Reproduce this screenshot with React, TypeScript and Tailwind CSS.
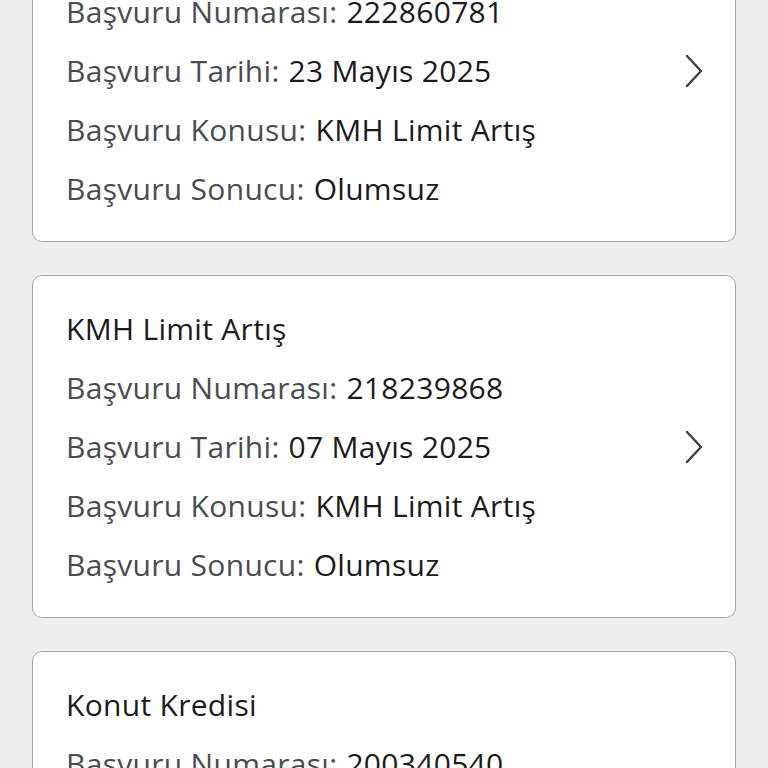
type Application = {
    title: string;
    number: string;
    date: string;
    subject: string;
    result: string;
};

const applications: Application[] = [
    { title: "KMH Limit Artış", number: "222860781", date: "23 Mayıs 2025", subject: "KMH Limit Artış", result: "Olumsuz" },
    { title: "KMH Limit Artış", number: "218239868", date: "07 Mayıs 2025", subject: "KMH Limit Artış", result: "Olumsuz" },
    { title: "Konut Kredisi", number: "200340540", date: "12 Nisan 2025", subject: "Konut Kredisi", result: "Olumsuz" },
];

function Row({ label, value }: { label: string; value: string }) {
    return (
        <div className="h-[59px] flex items-center whitespace-nowrap">
            <span className="text-[#474d52]">{label}:</span>
            <span className="ml-[9px] text-[#1b1b1b]">{value}</span>
        </div>
    );
}

function Chevron() {
    return (
        <svg width="20" height="34" viewBox="0 0 20 34" fill="none" className="shrink-0">
            <path d="M3 2 L17 17 L3 32" stroke="#3a4045" strokeWidth="2.4" strokeLinecap="round" strokeLinejoin="round" />
        </svg>
    );
}

function ApplicationCard({ app }: { app: Application }) {
    return (
        <div className="bg-white border-[1.5px] border-[#a3a3a3] rounded-[10px] pl-[33px] pr-[31px] pt-[23px] pb-[23px] flex items-center">
            <div className="flex-1">
                <div className="h-[59px] flex items-center text-[#1b1b1b]">{app.title}</div>
                <Row label="Başvuru Numarası" value={app.number} />
                <Row label="Başvuru Tarihi" value={app.date} />
                <Row label="Başvuru Konusu" value={app.subject} />
                <Row label="Başvuru Sonucu" value={app.result} />
            </div>
            <Chevron />
        </div>
    );
}

export default function App() {
    return (
        <div className="w-[768px] h-[768px] overflow-hidden bg-[#efefef]">
            <div
                className="mt-[-101px] px-[32px] flex flex-col gap-[33px] text-[30px] leading-none tracking-[0.3px]"
                style={{ fontFamily: "'Open Sans', 'Noto Sans', sans-serif" }}
            >
                {applications.map((app) => (
                    <ApplicationCard key={app.number} app={app} />
                ))}
            </div>
        </div>
    );
}
